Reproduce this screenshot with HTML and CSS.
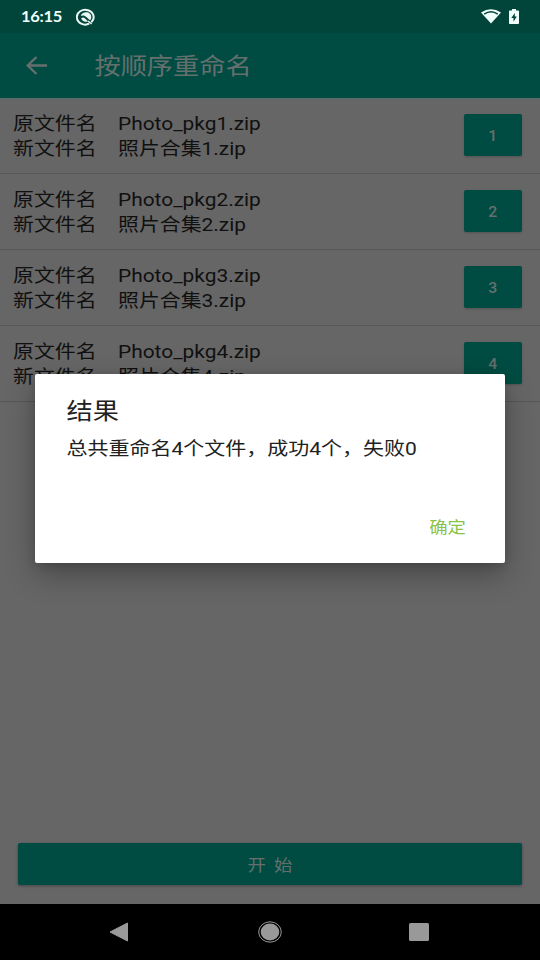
FILE: index.html
```html
<!DOCTYPE html>
<html lang="zh-CN">
<head>
<meta charset="utf-8">
<title>按顺序重命名</title>
<link rel="stylesheet" href="styles.css">
</head>
<body>
<div class="screen">
  <div class="status">
    <span class="time t">16:15</span>
    <svg class="q" width="20" height="18" viewBox="0 0 20 18"><path d="M15.300 14.300A8.400 7.400 0 1 0 13.200 15.700" fill="none" stroke="#e9f7f4" stroke-width="2"/><path d="M4.800 8C5.500 5.500 7.500 4.300 10 4.300c3.200 0 5.300 2.100 5.300 4.700 0 1.400-.5 2.500-1.300 3.300L10.300 9C9 7.500 6.800 6.900 4.800 8Z" fill="#e9f7f4"/><path d="M5.200 10.200c1.400-1 2.700-.8 3.600 0l3.200 3c-2.800 1.300-6.100 0-6.800-3Z" fill="#e9f7f4"/><path d="M12 13l3.600 3" stroke="#e9f7f4" stroke-width="1.600"/></svg>
    <svg class="wifi" width="20" height="15" viewBox="0 0 20 15"><path d="M0 3.500Q10-3 20 3.500L10 14.500Z" fill="#effffb"/><path d="M3.200 5.200Q10 .5 16.800 5.200" fill="none" stroke="#00443a" stroke-width="1.500"/></svg>
    <svg class="battery" width="10" height="15" viewBox="0 0 10 15"><path d="M3 0h4v1.500h2.200q.8 0 .8.8v11.900q0 .8-.8.8H.8Q0 15 0 14.200V2.300q0-.8.8-.8H3Z" fill="#effffb"/><path d="M5.800 4 2.300 9h2.200v3.800L7.800 7.500H5.800Z" fill="#00443a"/></svg>
  </div>
  <div class="bar">
    <svg class="back" width="22" height="19" viewBox="0 0 22 19"><path d="M21 9.500H2M10.500 1 1.700 9.500l8.800 8.500" fill="none" stroke="#65706e" stroke-width="2.400"/></svg>
    <h1 class="t">按顺序重命名</h1>
  </div>
  <div class="list">
    <div class="row"><div class="names"><div class="line"><span class="label t">原文件名</span><span class="t">Photo_pkg1.zip</span></div><div class="line"><span class="label t">新文件名</span><span class="t">照片合集1.zip</span></div></div><div class="num"><span class="t">1</span></div></div>
    <div class="row"><div class="names"><div class="line"><span class="label t">原文件名</span><span class="t">Photo_pkg2.zip</span></div><div class="line"><span class="label t">新文件名</span><span class="t">照片合集2.zip</span></div></div><div class="num"><span class="t">2</span></div></div>
    <div class="row"><div class="names"><div class="line"><span class="label t">原文件名</span><span class="t">Photo_pkg3.zip</span></div><div class="line"><span class="label t">新文件名</span><span class="t">照片合集3.zip</span></div></div><div class="num"><span class="t">3</span></div></div>
    <div class="row"><div class="names"><div class="line"><span class="label t">原文件名</span><span class="t">Photo_pkg4.zip</span></div><div class="line"><span class="label t">新文件名</span><span class="t">照片合集4.zip</span></div></div><div class="num"><span class="t">4</span></div></div>
  </div>
  <div class="start"><span class="t">开 始</span></div>
  <div class="nav">
    <svg width="20" height="20" viewBox="0 0 20 20"><path d="M1 10 18.500 1v18Z" fill="#999" stroke="#999" stroke-linejoin="round"/></svg>
    <svg width="24" height="22" viewBox="0 0 24 22"><ellipse cx="12" cy="11" rx="11.300" ry="10.200" fill="none" stroke="#999" stroke-width="1"/><ellipse cx="12" cy="11" rx="9.300" ry="8.500" fill="#999"/></svg>
    <svg width="20" height="18" viewBox="0 0 20 18"><rect width="20" height="18" rx="1.500" fill="#999"/></svg>
  </div>
  <div class="dialog">
    <h2 class="t">结果</h2>
    <p class="t">总共重命名4个文件，成功4个，失败0</p>
    <div class="actions"><span class="t">确定</span></div>
  </div>
</div>
</body>
</html>
```
FILE: styles.css
```css
* { box-sizing: border-box; }
body { margin: 0; font-family: Roboto, "Noto Sans CJK SC", sans-serif; }
h1, h2, p { margin: 0; font-weight: 400; }
.screen { position: relative; display: flex; flex-direction: column; width: 540px; height: 960px; overflow: hidden; background: #666; }
/* Glyphs are drawn wider than tall */
.t { display: block; transform: scaleY(.889); white-space: nowrap; }
.status { flex: none; display: flex; align-items: center; height: 33px; padding: 0 21px 0 21px; background: #00443a; }
.time { width: 54.500px; font: 700 16.500px/20px Lato, sans-serif; letter-spacing: -.3px; color: #effffb; }
.wifi { margin-left: auto; margin-right: 8px; }
.bar { flex: none; display: flex; align-items: center; height: 65px; padding-left: 26px; background: #004c42; }
.back { margin-right: 46.500px; }
.bar h1 { font-size: 26.200px; line-height: 32px; color: #65706e; }
.list { border-top: 1px solid #51706b; }
.row { display: flex; justify-content: space-between; height: 76px; padding: 14px 18.500px 0 13px; border-bottom: 1px solid #575757; }
.row:first-child { height: 75px; padding-top: 13px; }
.line { display: flex; height: 25px; line-height: 25px; color: #101010; }
.line .t { font-size: 20.900px; }
.label { width: 105px; }
.num { display: flex; align-items: center; justify-content: center; width: 57.500px; height: 42px; margin-top: 2px; border-radius: 2px; background: #004c42; box-shadow: 0 1px 2px #4448; font-size: 15.750px; font-weight: 500; color: #65706e; }
.num .t { padding-top: 2px; }
.start { display: flex; align-items: center; justify-content: center; height: 42px; margin: auto 18.500px 19px 18px; border-radius: 2px; background: #004c42; box-shadow: 0 1px 3px #333a; font-size: 18.400px; letter-spacing: 1.800px; color: #65706e; }
.start .t { padding-left: 2px; }
.nav { flex: none; display: flex; align-items: center; justify-content: space-between; height: 56px; padding: 0 111px 0 109px; background: #000; }
.nav svg:nth-child(2) { margin-left: 2px; }
.dialog { position: absolute; left: 35px; top: 373.500px; width: 470px; height: 189.500px; padding: 21px 32px 0 31.500px; border-radius: 2px; background: #fff; box-shadow: 0 12px 30px #0000004d, 0 2px 8px #0002; }
.dialog h2 { font-size: 26.200px; line-height: 32px; color: #212121; }
.dialog p { margin-top: 9px; font-size: 21px; line-height: 26px; color: #212121; }
.actions { display: flex; justify-content: flex-end; margin-top: 53px; padding-right: 7px; font-size: 18.400px; line-height: 26px; color: #8bc34a; }
```
